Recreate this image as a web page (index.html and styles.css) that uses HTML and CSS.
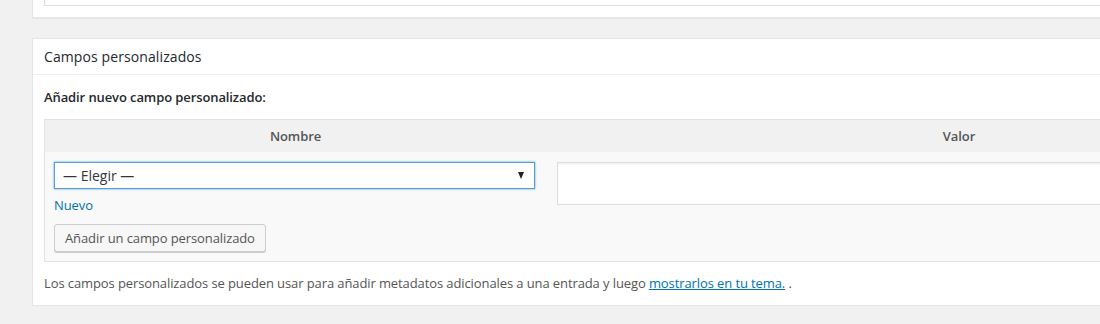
FILE: index.html
```html
<!DOCTYPE html>
<html lang="es">
<head>
    <meta charset="UTF-8">
    <meta name="viewport" content="width=device-width, initial-scale=1.0">
    <title>Campos personalizados</title>
    <link rel="stylesheet" href="styles.css">
</head>
<body>
    <div class="postbox top-box">
        <div class="inner-box"></div>
    </div>

    <div class="postbox">
        <h2 class="box-title">Campos personalizados</h2>
        <div class="inside">
            <p class="new-label">Añadir nuevo campo personalizado:</p>
            <table class="meta-table">
                <thead>
                    <tr>
                        <th class="col-name">Nombre</th>
                        <th class="col-value">Valor</th>
                    </tr>
                </thead>
                <tbody>
                    <tr>
                        <td class="cell-name">
                            <div class="select-box">
                                <span>— Elegir —</span>
                                <span class="arrow"></span>
                            </div>
                            <p class="new-link"><a href="#">Nuevo</a></p>
                            <button class="button" type="button">Añadir un campo personalizado</button>
                        </td>
                        <td class="cell-value">
                            <div class="value-box"></div>
                        </td>
                    </tr>
                </tbody>
            </table>
            <p class="help-text">Los campos personalizados se pueden usar para añadir metadatos adicionales a una entrada y luego <a href="#">mostrarlos en tu tema.</a> .</p>
        </div>
    </div>
</body>
</html>
```

FILE: styles.css
```css
body {
    margin: 0;
    font-family: "Open Sans", "Noto Sans", sans-serif;
    font-size: 13px;
    letter-spacing: -0.1px;
    color: #444;
    background-color: #f1f1f1;
    overflow: hidden;
}

.postbox {
    margin-left: 32px;
    width: 1400px;
    background-color: #fff;
    border: 1px solid #e5e5e5;
    box-shadow: 0 1px 1px rgba(0,0,0,0.04);
}

.top-box {
    border-top: none;
    padding: 0 0 11px 11px;
}

.inner-box {
    height: 5px;
    border: 1px solid #dfdfdf;
    border-top: none;
}

.top-box + .postbox {
    margin-top: 20px;
}

.box-title {
    margin: 0;
    padding: 8px 12px 8px 11px;
    font-size: 14px;
    font-weight: normal;
    letter-spacing: 0.1px;
    line-height: 19px;
    color: #23282d;
    border-bottom: 1px solid #eee;
}

.inside {
    padding: 0 12px 12px 11px;
}

.new-label {
    margin: 13px 0 12px;
    font-weight: 600;
    line-height: 19px;
    color: #23282d;
}

.meta-table {
    width: 1329px;
    table-layout: fixed;
    border-collapse: collapse;
    border: 1px solid #e1e1e1;
    background-color: #f9f9f9;
}

.meta-table th {
    background-color: #f1f1f1;
    padding: 6px 10px;
    line-height: 20px;
    font-weight: 600;
    color: #555;
    text-align: center;
}

.col-name {
    width: 481px;
}

.meta-table td {
    vertical-align: top;
}

.cell-name {
    padding: 10px 10px 9px 9px;
}

.cell-value {
    padding: 10px 0 0 11px;
}

.select-box {
    display: flex;
    justify-content: space-between;
    align-items: center;
    box-sizing: border-box;
    width: 481px;
    height: 27px;
    padding: 0 8px;
    font-size: 14px;
    letter-spacing: 0;
    background-color: #fff;
    border: 1px solid #5b9dd9;
    box-shadow: 0 0 2px rgba(30,140,190,0.8);
    color: #32373c;
}

.arrow {
    width: 0;
    height: 0;
    border-left: 3.5px solid transparent;
    border-right: 3.5px solid transparent;
    border-top: 7px solid #222;
    margin-right: 2px;
}

.new-link {
    margin: 7px 0 9px 0;
    line-height: 19px;
}

a {
    color: #0073aa;
    text-decoration: none;
}

.button {
    height: 28px;
    padding: 0 10px;
    font-family: inherit;
    font-size: 13px;
    letter-spacing: -0.1px;
    line-height: 26px;
    color: #555;
    background-color: #f7f7f7;
    border: 1px solid #ccc;
    border-radius: 3px;
    box-shadow: 0 1px 0 #ccc;
    cursor: pointer;
}

.value-box {
    box-sizing: border-box;
    height: 43px;
    background-color: #fff;
    border: 1px solid #ddd;
    box-shadow: inset 0 1px 2px rgba(0,0,0,0.07);
}

.help-text {
    margin: 12px 0 0;
    line-height: 19px;
    color: #555;
}

.help-text a {
    text-decoration: underline;
}
```
